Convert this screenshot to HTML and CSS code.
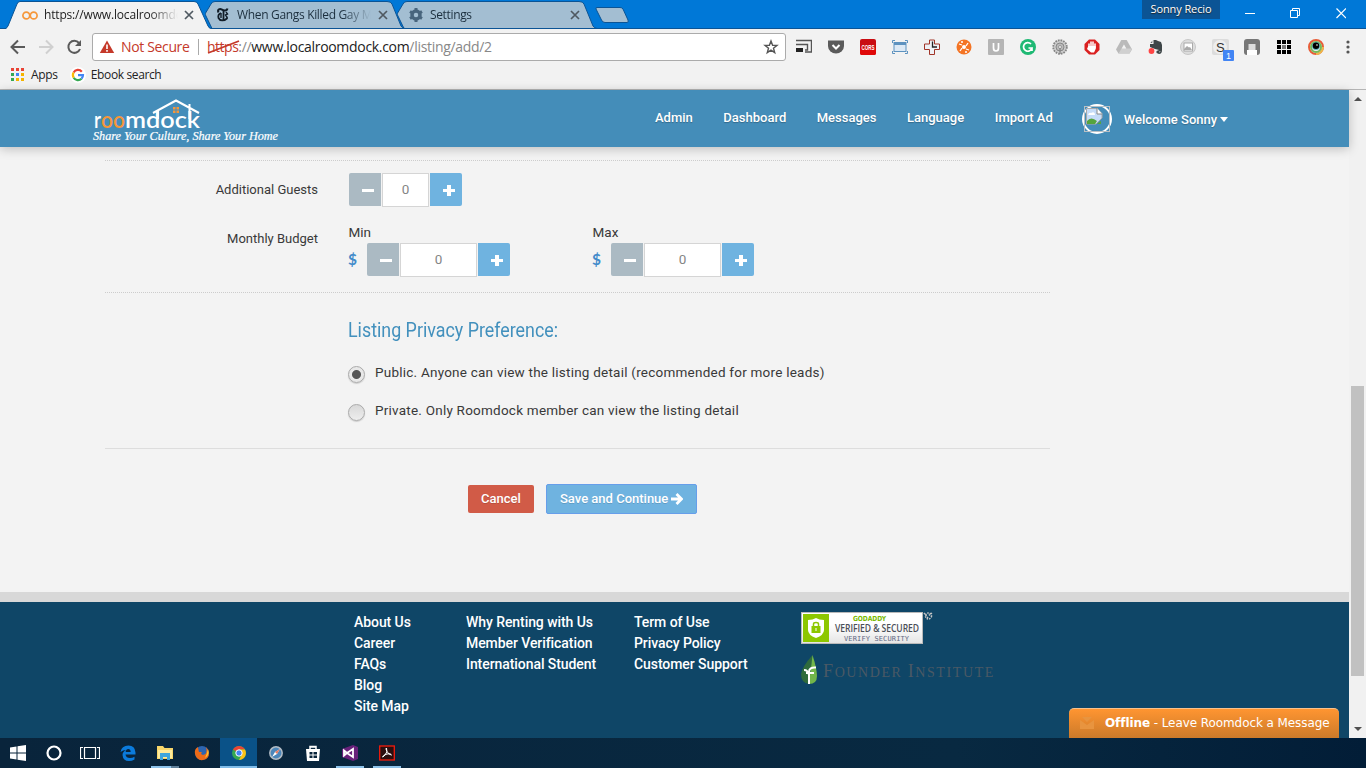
FILE: index.html
```html
<!DOCTYPE html>
<html lang="en">
<head>
<meta charset="utf-8">
<title>Roomdock</title>
<link rel="stylesheet" href="styles.css">
</head>
<body>
<div class="tabstrip">
  <div class="tab tab-first">
    <svg class="tab-shape" width="206" height="29" viewBox="0 0 206 29"><path d="M0 29L2 26L11 4Q12 1.500 14 1.500H188Q191 1.500 192 4L202 26Q203 29 206 29Z" fill="#f2f2f2"/><path d="M0 28.500L2 26L11 4Q12 1.500 14 1.500H188Q191 1.500 192 4L202 26Q203 28.500 206 28.500" fill="none" stroke="#0b5495"/></svg>
    <svg class="fav" width="16" height="16" viewBox="0 0 16 16"><g fill="none" stroke="#f6973a" stroke-width="1.700"><circle cx="4.300" cy="8.500" r="3.400"/><circle cx="11.700" cy="8.500" r="3.400"/></g></svg>
    <span class="tab-title t1">https://www.localroomdc</span>
    <svg class="close" width="10" height="10" viewBox="0 0 10 10"><path d="M1 1L9 9M9 1L1 9"/></svg>
  </div>
  <div class="tab tab-second">
    <svg class="tab-shape" width="206" height="29" viewBox="0 0 206 29"><path d="M0 14L6 4Q7 1.500 10 1.500H182Q186 1.500 187 4L196 26Q197 28 200 28.500H7Z" fill="#a3bed2" stroke="#0b5495"/></svg>
    <svg class="fav" width="16" height="16" viewBox="0 0 16 16"><g fill="none" stroke="#111d28"><path d="M3.500 5.500C2 2 5 1.500 7 2.700S12 4 12.500 1.500" stroke-width="2"/><path d="M6 6C3.500 7 3 9 3.500 11C5 14 9 14.500 12.500 11" stroke-width="1.800"/><path d="M8.500 3.500V13" stroke-width="1.800"/><path d="M6 6V11M11 5L12.500 7L10.500 8L12.500 11" stroke-width="1.400"/></g></svg>
    <span class="tab-title t2">When Gangs Killed Gay M</span>
    <svg class="close" width="10" height="10" viewBox="0 0 10 10"><path d="M1 1L9 9M9 1L1 9"/></svg>
  </div>
  <div class="tab tab-third">
    <svg class="tab-shape" width="206" height="29" viewBox="0 0 206 29"><path d="M0 14L6 4Q7 1.500 10 1.500H182Q186 1.500 187 4L196 26Q197 28 200 28.500H7Z" fill="#a3bed2" stroke="#0b5495"/></svg>
    <svg class="fav" width="16" height="16" viewBox="0 0 16 16"><circle cx="8" cy="8" r="4" fill="none" stroke="#48657d" stroke-width="3.500"/><path d="M8 1V4M8 12V15M2 4.500L4.500 6M11.500 10L14 11.500M2 11.500L4.500 10M11.500 6L14 4.500" stroke="#48657d" stroke-width="3"/></svg>
    <span class="tab-title t3">Settings</span>
    <svg class="close" width="10" height="10" viewBox="0 0 10 10"><path d="M1 1L9 9M9 1L1 9"/></svg>
  </div>
  <svg class="newtab" width="34" height="17" viewBox="0 0 34 17"><path d="M2 .5H25Q27 .5 28 2L33 13Q34 15.500 32 15.500H10Q7.500 15.500 6.500 13L1 2Q.5.5 2 .5Z" fill="#a3bed2" stroke="#0b5495"/></svg>
  <div class="winbar">
    <span class="user">Sonny Recio</span>
    <svg width="110" height="26" viewBox="0 0 110 26" fill="none" stroke="#fff"><path d="M9 13.500H19M54.500 10.500H61.500V17.500H54.500ZM56.500 10V8.500H63.500V15.500H62"/><path d="M100.500 8.500L110 18M110 8.500L100.500 18" stroke-width="1.200"/></svg>
  </div>
</div>
<div class="toolbar">
  <svg class="navicons" width="86" height="24" viewBox="0 0 86 24" fill="none" stroke-width="2"><path d="M25 12H12M18 5.500L11.500 12L18 18.500" stroke="#5a5a5a"/><path d="M39 12H52M46 5.500L52.500 12L46 18.500" stroke="#d0d0d0"/><path d="M79 8A6 6 0 1 0 80 14" stroke="#5a5a5a"/><path d="M81 5V11H75Z" fill="#5a5a5a"/></svg>
  <div class="omnibox">
    <svg class="warn" width="16" height="16" viewBox="0 0 16 16"><path d="M8 1.500L15.200 14H.8Z" fill="#c5392a"/><path d="M8 5.500V10M8 11V12.800" stroke="#fff" stroke-width="1.600"/></svg>
    <span class="notsecure">Not Secure</span>
    <span class="sep"></span>
    <span class="scheme">https<svg class="strike" width="34" height="14" viewBox="0 0 34 14"><path d="M1 13L32 1" stroke="#c5392a" stroke-width="1.800"/></svg></span><span class="url"><i>://</i>www.localroomdock.com<i>/listing/add/2</i></span>
    <svg class="star" width="16" height="16" viewBox="0 0 16 16"><path d="M8 2L9.600 6.200L14 6.400L10.500 9.200L11.700 13.600L8 11.100L4.300 13.600L5.500 9.200L2 6.400L6.400 6.200Z" fill="none" stroke="#555" stroke-width="1.400"/></svg>
  </div>
  <div class="exts">
    <svg viewBox="0 0 16 16"><path d="M0 1.500H15.500V13H9M0 5.500H11.500V11H9" fill="none" stroke="#555" stroke-width="1.400"/><path d="M0 9H7V13H0Z" fill="#222"/></svg>
    <svg viewBox="0 0 16 16"><path d="M0 1.500H16V7A8 7.500 0 0 1 0 7Z" fill="#5b5b5b"/><path d="M4.500 6L8 9.500L11.500 6" fill="none" stroke="#fff" stroke-width="2"/></svg>
    <svg viewBox="0 0 16 16"><rect width="16" height="16" rx="2" fill="#c90d12"/><rect y="9" width="16" height="7" rx="2" fill="#e00909"/><text x="1.500" y="10.700" class="cors" textLength="13" lengthAdjust="spacingAndGlyphs">CORS</text></svg>
    <svg viewBox="0 0 16 16" fill="none" stroke="#5d92bf"><rect x="2" y="3.500" width="12" height="9" fill="#dce9f5"/><path d="M2 5H14" stroke-width="2"/><path d="M.5 4V1.500H3M13 1.500H15.500V4M.5 12V14.500H3M13 14.500H15.500V12"/></svg>
    <svg viewBox="0 0 16 16"><path d="M5.500 1H10.500V5H15.500V10.500H10.500V15.500H5.500V10.500H.5V5H5.500Z" fill="#eef1f5" stroke="#a13529"/><path d="M8.500 2.500V8H13" fill="none" stroke="#222" stroke-width="1.300"/></svg>
    <svg viewBox="0 0 16 16"><circle cx="8" cy="8" r="7.500" fill="#f47424"/><circle cx="8" cy="8" r="2" fill="#fff"/><path d="M3 5L6 6M4 12L6 9M13 11L10 10M12 4L10 7M5 3L7 3M11 13H9" stroke="#fff" stroke-width="1.300"/></svg>
    <svg viewBox="0 0 16 16"><rect width="16" height="16" rx="1" fill="#b5b5b5"/><path d="M5.500 4V9Q5.500 12 8 12T10.500 9V4" fill="none" stroke="#fff" stroke-width="1.700"/></svg>
    <svg viewBox="0 0 16 16"><circle cx="8" cy="8" r="8" fill="#1fb974"/><path d="M11 5A4.300 4.300 0 1 0 12 9H8.500M12 9V12" fill="none" stroke="#fff" stroke-width="1.700"/></svg>
    <svg viewBox="0 0 16 16"><circle cx="8" cy="8" r="6.800" fill="#ccc" stroke="#858585" stroke-width="1.800" stroke-dasharray="1.700 1"/><circle cx="8" cy="8" r="4" fill="#bbb" stroke="#888"/><circle cx="8" cy="8" r="1.500" fill="#eee" stroke="#777" stroke-width=".6"/><path d="M8 9V15" stroke="#777"/></svg>
    <svg viewBox="0 0 16 16"><path d="M5 .5H11L15.500 5V11L11 15.500H5L.5 11V5Z" fill="#da2020"/><path d="M5 9V5M7 8V3M9 8V3M11 9V5" stroke="#fff" stroke-width="1.500" stroke-linecap="round"/><path d="M4.300 7H11.700V10L10 13.500H7L3 10Z" fill="#fff"/></svg>
    <svg viewBox="0 0 16 16"><path d="M5.300 1H10.700L16 10.500L13.500 14.500H2.500L0 10.500Z" fill="#bababa"/><path d="M5.300 1L10 9.500H16L13.500 14.500H2.500L8 5.500Z" fill="#d0d0d0"/><path d="M8 5.500L10.300 9.500H5.700Z" fill="#f2f2f2"/></svg>
    <svg viewBox="0 0 16 16"><path d="M5.500 1H8L10 2L13 3L14 6V11Q14 15 11 15L8.500 14V12L11 11L7 10L2 8V5H5.500Z" fill="#3e4648"/><path d="M2 4L4.500 1.500V4ZM11 13H12V12" fill="#3e4648" stroke="#eee" stroke-width=".5"/><circle cx="3.500" cy="12" r="2.900" fill="#ff4545"/></svg>
    <svg viewBox="0 0 16 16"><circle cx="8" cy="8" r="7.500" fill="#ddd" stroke="#c7c7c7"/><rect x="4" y="4" width="8.500" height="8" fill="#fff" stroke="#aaa"/><path d="M4 10L7 7L9 8.500L10 8L12 11H4Z" fill="#aaa"/></svg>
    <svg viewBox="0 0 24 24" class="sext"><rect width="17" height="16" rx="2" fill="#dcdcdc"/><circle cx="8" cy="8" r="7" fill="#eee"/><text x="4" y="12.500" class="s">S</text><rect x="11" y="11" width="11" height="11" rx="1" fill="#4285f4"/><text x="14" y="20" class="one">1</text></svg>
    <svg viewBox="0 0 16 16"><rect width="16" height="16" rx="3" fill="#777"/><rect x="4.500" y="5" width="7" height="7" fill="#ddd"/><path d="M3 16V11H13V16Z" fill="#fff"/></svg>
    <svg viewBox="0 0 16 16"><path d="M1 1H5V5H1ZM6 1H10V5H6ZM11 1H15V5H11ZM1 6H5V10H1ZM11 6H15V10H11ZM1 11H5V15H1ZM6 11H10V15H6ZM11 11H15V15H11Z"/><path d="M6 6H10V10H6Z" fill="#777"/></svg>
    <svg viewBox="0 0 16 16"><circle cx="8" cy="8" r="7" fill="none" stroke="#e85d38" stroke-width="2"/><path d="M8 15A7 7 0 0 0 15 8" fill="none" stroke="#edb84a" stroke-width="2"/><circle cx="8" cy="8" r="5" fill="none" stroke="#73b958" stroke-width="2"/><circle cx="8" cy="7" r="4" fill="#58aeb7"/><circle cx="8" cy="6.800" r="3.200"/><circle cx="9" cy="6" r=".8" fill="#fff"/></svg>
    <svg viewBox="0 0 16 16" fill="#555"><circle cx="8" cy="3" r="1.600"/><circle cx="8" cy="8" r="1.600"/><circle cx="8" cy="13" r="1.600"/></svg>
  </div>
</div>
<div class="bookmarks">
  <svg width="14" height="14" viewBox="0 0 14 14"><path d="M0 0H3V3H0ZM5 0H8V3H5ZM10 0H13V3H10Z" fill="#e94335"/><path d="M0 5H3V8H0ZM0 10H3V13H0Z" fill="#34a853"/><path d="M5 5H8V8H5Z" fill="#4285f4"/><path d="M10 5H13V8H10ZM5 10H8V13H5ZM10 10H13V13H10Z" fill="#f5b400"/></svg>
  <span class="bm-apps">Apps</span>
  <svg width="16" height="16" viewBox="0 0 16 16"><circle cx="8" cy="8" r="8" fill="#fff"/><g fill="none" stroke-width="2.200"><path d="M3.600 5.500A5 5 0 0 1 11.800 4.700" stroke="#ea4335"/><path d="M3.600 5.500A5 5 0 0 0 3.700 10.700" stroke="#fbbc05"/><path d="M3.700 10.700A5 5 0 0 0 11.500 11.700" stroke="#34a853"/><path d="M11.500 11.700A5 5 0 0 0 13 8.100H8" stroke="#4285f4"/></g></svg>
  <span class="bm-search">Ebook search</span>
</div>
<div class="viewport">
  <div class="page">
    <header class="header">
      <svg class="logo" width="200" height="57" viewBox="0 0 200 57">
        <text class="logo-text" x="14" y="38" textLength="7" lengthAdjust="spacingAndGlyphs">r</text>
        <text class="logo-text oo" x="21" y="38" textLength="24" lengthAdjust="spacingAndGlyphs">oo</text>
        <text class="logo-text" x="45" y="38" textLength="75" lengthAdjust="spacingAndGlyphs">mdock</text>
        <path d="M73 23L96 10.500L119 23M109.500 14V29M78 21V29" fill="none" stroke="#fff" stroke-width="2"/>
        <path d="M93 17H95.500V19.500H93ZM96.500 17H99V19.500H96.500ZM93 20.500H95.500V23H93ZM96.500 20.500H99V23H96.500Z" fill="#f6973a"/>
        <text class="tagline" x="13" y="50" textLength="185" lengthAdjust="spacingAndGlyphs">Share Your Culture, Share Your Home</text>
      </svg>
      <nav class="nav"><a>Admin</a><a>Dashboard</a><a>Messages</a><a>Language</a><a>Import Ad</a></nav>
      <svg class="avatar" width="32" height="32" viewBox="0 0 32 32"><circle cx="16" cy="16" r="14" fill="none" stroke="#fff" stroke-width="2"/><rect x="3.500" y="3.500" width="25" height="25" fill="none" stroke="#b9c0c5"/><path d="M5.500 5.500H16L21 10.500V15L15 21H5.500Z" fill="#c5dcf8" stroke="#aaa"/><path d="M16 5V11H21" fill="#fff" stroke="#888"/><path d="M7 12Q8 9 10 10Q14 8 14 12Z" fill="#fff"/><path d="M6 21V18Q10 13 16 18L14 21ZM16 21L20 18V21Z" fill="#55a43d"/></svg>
      <span class="welcome">Welcome Sonny</span><span class="caret"></span>
    </header>
    <main class="main">
      <section class="row guests">
        <label class="label">Additional Guests</label>
        <div class="stepper small"><span class="btn minus"></span><span class="field">0</span><span class="btn plus"></span></div>
      </section>
      <section class="row budget">
        <label class="label">Monthly Budget</label>
        <div class="amount"><div class="cap">Min</div><div class="line"><b>$</b><div class="stepper"><span class="btn minus"></span><span class="field">0</span><span class="btn plus"></span></div></div></div>
        <div class="amount"><div class="cap">Max</div><div class="line"><b>$</b><div class="stepper"><span class="btn minus"></span><span class="field">0</span><span class="btn plus"></span></div></div></div>
      </section>
      <section class="privacy">
        <h2>Listing Privacy Preference:</h2>
        <div class="option"><span class="radio on"></span><span class="o1">Public. Anyone can view the listing detail (recommended for more leads)</span></div>
        <div class="option"><span class="radio"></span><span class="o2">Private. Only Roomdock member can view the listing detail</span></div>
      </section>
      <div class="actions"><span class="cancel">Cancel</span><span class="save">Save and Continue <svg width="12" height="12" viewBox="0 0 12 12"><path d="M0 6H10M5.500 1L10.500 6L5.500 11" fill="none" stroke="#fff" stroke-width="2.800"/></svg></span></div>
    </main>
    <footer class="footer">
      <div class="col c1"><a>About Us</a><a>Career</a><a>FAQs</a><a>Blog</a><a>Site Map</a></div>
      <div class="col c2"><a>Why Renting with Us</a><a>Member Verification</a><a>International Student</a></div>
      <div class="col c3"><a>Term of Use</a><a>Privacy Policy</a><a>Customer Support</a></div>
      <div class="col c4">
        <svg width="132" height="32" viewBox="0 0 132 32"><defs><linearGradient id="bg" x2="0" y2="1"><stop offset=".4" stop-color="#fff"/><stop offset="1" stop-color="#e4e4e4"/></linearGradient></defs><rect x=".5" y=".5" width="121" height="31" fill="url(#bg)" stroke="#b9b9b9"/><rect x="2" y="2" width="26" height="28" fill="#8dc700"/><path d="M7 8Q12 8 15 6Q18 8 23 8V18Q23 23 15 26Q7 23 7 18Z" fill="#fff"/><rect x="10.500" y="14" width="9" height="7" fill="#8dc700"/><path d="M12.500 14V12Q12.500 10.500 15 10.500T17.500 12V14" fill="none" stroke="#8dc700" stroke-width="1.500"/><path d="M15 16V19" stroke="#fff"/><text class="gd" x="52" y="9" textLength="33" lengthAdjust="spacingAndGlyphs">GODADDY</text><text class="vs" x="34" y="20" textLength="84" lengthAdjust="spacingAndGlyphs">VERIFIED &amp; SECURED</text><text class="verify" x="43" y="28.500" textLength="65">VERIFY SECURITY</text><g fill="none" stroke="#c5c5c5" stroke-width="1.500" stroke-dasharray="1.500 1"><circle cx="127.500" cy="4" r="3"/><path d="M123 1L127 6M131 1L127 4"/></g></svg>
        <svg class="founder" width="200" height="30" viewBox="0 0 200 30"><path d="M11.500 0Q1 12 0 19Q0 28 8 29Z" fill="#2f6b3c"/><path d="M11.500 0L8 29Q16 29 16 21Q16 14 11.500 0Z" fill="#72b64a"/><path d="M8 29V17Q8 12 15 12.500M3 15Q7 15 8 20M5 18H13" fill="none" stroke="#fff" stroke-width="2"/><text class="fi" x="22" y="22"><tspan class="big">F</tspan>OUNDER <tspan class="big">I</tspan>NSTITUTE</text></svg>
      </div>
    </footer>
    <div class="chat"><svg width="14" height="12" viewBox="0 0 14 12"><path d="M0 3L7 8L14 3V12H0ZM2 0H12L7 5Z" fill="#e8943f"/></svg><span><b>Offline</b> - Leave Roomdock a Message</span></div>
  </div>
  <div class="scroll"><i class="up"></i><div class="thumb"></div><i class="down"></i></div>
</div>
<div class="taskbar">
  <span class="task sm"><svg viewBox="0 0 16 16" fill="#fff"><path d="M0 2.500L6.500 1.500V7.500H0ZM7.500 1.300L16 0V7.500H7.500ZM0 8.500H6.500V14.500L0 13.500ZM7.500 8.500H16V16L7.500 14.700Z"/></svg></span>
  <span class="task sm"><svg viewBox="0 0 16 16"><circle cx="8" cy="8" r="6.500" fill="none" stroke="#fff" stroke-width="2.200"/></svg></span>
  <span class="task sm"><svg class="wide" viewBox="0 0 20 16"><path d="M4.500 2.500H15.500V13.500H4.500ZM3 2.500H.5V13.500H3M17 2.500H19.500V13.500H17" fill="none" stroke="#fff" stroke-width="1.200"/></svg></span>
  <span class="task first"><svg viewBox="0 0 16 16"><path d="M.5 7Q1.500 .5 8.500.5Q15 .5 15.500 7.500V9.500H5.500Q6 13 10 13Q12.500 13 14.500 11.800V14.500Q12 16 9 16Q3 16 2.500 10Q2.500 7 6 5Q3 5 .5 7ZM5.700 7H10.700Q10.500 4 8.300 4Q6 4 5.700 7Z" fill="#0b7bdc"/></svg></span>
  <span class="task open split"><svg viewBox="0 0 16 16"><path d="M0 1H6L7.500 3H16V14H0Z" fill="#f8d66b"/><path d="M1 5H15V13H1Z" fill="#ffeb9b"/><path d="M3 8H13V15H10V12H6V15H3Z" fill="#3fa6dc"/></svg></span>
  <span class="task"><svg viewBox="0 0 16 16"><circle cx="8" cy="8" r="7" fill="#2d65b0"/><path d="M4 2Q0 4 1 9Q3 16 9 15Q15 14 15 8Q14 4 12 2Q14 9 9 10Q6 9 8 7H5Q4 4 4 2Z" fill="#ed6b18"/><path d="M14 4Q16 10 11 13Q13 9 14 4Z" fill="#ffc529"/></svg></span>
  <span class="task active"><svg viewBox="0 0 16 16"><circle cx="8" cy="8" r="7" fill="#35a852"/><path d="M8 8L2 4.500A7 7 0 0 1 14 4.500H8Z" fill="#ea4335"/><path d="M8 4.500H14A7 7 0 0 1 8 15L11 9Z" fill="#fbc116"/><circle cx="8" cy="8" r="3.200" fill="#4285f4" stroke="#fff"/></svg></span>
  <span class="task"><svg viewBox="0 0 16 16"><circle cx="8" cy="8" r="6.200" fill="#4b86ba" stroke="#b3bcc5" stroke-width="1.500"/><path d="M12 4L9 9L4 12L7 7Z" fill="#fff"/><path d="M12 4L9 9L7 7Z" fill="#e37964"/></svg></span>
  <span class="task"><svg viewBox="0 0 16 16"><path d="M5 5V1.500H11V5M5 2H11" fill="none" stroke="#fff" stroke-width="1.500"/><path d="M1 4H15L14 16H2Z" fill="#fff"/><path d="M4.500 7H7.500V9.500H4.500ZM8.500 7H12V9.500H8.500ZM4.500 10.500H7.500V13H4.500ZM8.500 10.500H12V13H8.500Z" fill="#09243b"/></svg></span>
  <span class="task open"><svg viewBox="0 0 16 16"><path d="M11 0L16 2V14L11 16L0 12V4Z" fill="#68217a"/><path d="M2 5.500V10.500L5 8L11 4V12L5 8Z" fill="none" stroke="#fff" stroke-width="1.800"/></svg></span>
  <span class="task open"><svg viewBox="0 0 16 16"><rect x=".7" y="1" width="14.600" height="14" fill="#2b0f10" stroke="#f21b0c" stroke-width="1.300"/><path d="M7.500 3Q9 7 6 10T3.500 12Q4 10 8 9T12.500 10Q10 10 8 6.500T7.500 3" fill="none" stroke="#fff"/></svg></span>
</div>
</body>
</html>
```
FILE: styles.css
```css
* { box-sizing: border-box; }
body { margin: 0; width: 1366px; height: 768px; overflow: hidden; display: flex; flex-direction: column; font-family: Roboto, "Liberation Sans", sans-serif; background: #f3f3f3; }
svg { display: block; flex: none; }
.tabstrip { height: 29px; background: #0078d7; border-bottom: 1px solid #0b5495; display: flex; position: relative; }
.tab { position: relative; height: 29px; display: flex; align-items: center; width: 206px; padding-left: 16px; flex: none; }
.tab-shape { position: absolute; left: 0; top: 0; }
.tab-first { margin-left: 6px; z-index: 3; }
.tab-second { margin-left: -7px; padding-left: 10px; z-index: 2; }
.tab-third { margin-left: -14px; width: 204px; padding-left: 11px; z-index: 1; }
.tab .fav { position: relative; margin-right: 6px; }
.tab-title { position: relative; width: 134px; margin-right: 6px; white-space: nowrap; font: 12px/16px "Open Sans", sans-serif; color: #222; mask-image: linear-gradient(90deg, #000 105px, transparent 134px); }
.t2, .t3 { color: #1c2f3e; }
.t1 { letter-spacing: -.17px; }
.t2 { letter-spacing: -.33px; margin-right: 7px; }
.t3 { letter-spacing: -.35px; }
.close { position: relative; stroke: #4f5961; stroke-width: 1.700; }
.newtab { margin: 7px 0 0 -6px; }
.winbar { margin-left: auto; display: flex; padding-right: 20px; }
.user { width: 78px; height: 19px; background: #0b5495; color: #fff; font: 11px/18px "Open Sans", sans-serif; text-align: center; margin-right: 16px; text-shadow: 0 1px 1px #222; letter-spacing: -.1px; }
.toolbar { height: 35px; background: #f2f2f2; display: flex; padding-top: 4px; }
.navicons { margin: 2px 6px 0 0; }
.omnibox { width: 694px; height: 28px; border: 1px solid #ababab; border-radius: 3px; background: #fff; display: flex; align-items: center; font: 14px/20px "Open Sans", sans-serif; padding: 0 6px; }
.notsecure { margin-left: 6px; width: 77px; color: #c5392a; white-space: nowrap; letter-spacing: -.35px; }
.sep { width: 1px; height: 16px; background: #aaa; margin-right: 8px; }
.scheme { position: relative; color: #c5392a; letter-spacing: -.5px; }
.strike { position: absolute; left: 0; top: 3px; }
.url { color: #222; white-space: nowrap; letter-spacing: -.31px; }
.url i { color: #888; font-style: normal; }
.star { margin-left: auto; }
.exts { display: grid; grid-template-columns: repeat(18, 32px); margin-left: 2px; justify-items: center; padding-top: 6px; }
.exts svg { width: 16px; height: 16px; }
.exts .sext { width: 24px; height: 24px; margin-left: 7px; }
.cors { font: bold 7px "Liberation Sans"; fill: #fff; }
.s { font: 13px "Liberation Sans"; fill: #333; }
.one { font: 9px "Liberation Sans"; fill: #fff; }
.bookmarks { height: 26px; background: #f2f2f2; border-bottom: 1px solid #b5b5b5; display: flex; align-items: center; padding: 0 0 4px 11px; font: 12px/16px "Open Sans", sans-serif; color: #222; }
.bm-apps { margin: 0 12px 0 6px; letter-spacing: -.3px; }
.bm-search { margin-left: 5px; letter-spacing: -.37px; }
.viewport { height: 648px; display: flex; }
.page { width: 1349px; position: relative; display: flex; flex-direction: column; background: #f3f3f3; }
.header { height: 57px; background: #448db9; display: flex; align-items: center; box-shadow: 0 2px 10px rgba(0,0,0,.22); position: relative; color: #fff; font: 500 13px/16px Roboto, sans-serif; padding-left: 80px; }
.nav { display: flex; gap: 30.5px; margin-left: 375px; padding-bottom: 2px; text-shadow: 0 1px 1px rgba(0,0,0,.25); }
.avatar { margin-left: 28px; }
.welcome { margin: 2px 0 0 11px; text-shadow: 0 1px 1px rgba(0,0,0,.25); }
.caret { border: 4px solid transparent; border-top: 5px solid #fff; border-bottom: 0; margin: 1px 0 0 3px; }
.logo-text { font: 600 22px Lato, sans-serif; fill: #fff; }
.logo-text.oo { fill: #f6973a; }
.tagline { font: italic 12px "Liberation Serif", serif; fill: #fff; stroke: #fff; stroke-width: .2; }
.main { height: 445px; margin-left: 105px; width: 945px; padding-top: 13px; color: #393939; font-size: 13px; }
.row { border-top: 1px dotted #ccc; display: flex; }
.label { width: 213px; text-align: right; margin-right: 31px; flex: none; font-size: 13px; line-height: 18px; }
.guests { height: 61px; padding-top: 12px; }
.guests .label { padding-top: 8px; }
.budget { border-top: 0; border-bottom: 1px dotted #ccc; height: 72px; }
.budget .label { padding-top: 9px; }
.amount { width: 244px; margin-left: -1px; margin-right: 1px; }
.cap { font-size: 13.5px; line-height: 18px; padding: 2px 0 0 .5px; margin-bottom: 2px; }
.line { display: flex; }
.line b { width: 19px; color: #428bca; font: 700 15.5px/32px Lato, sans-serif; }
.stepper { display: flex; gap: 1px; }
.stepper .btn { width: 32px; height: 33px; background: #abbac3; position: relative; border-radius: 2px 0 0 2px; }
.stepper .plus { background: #6fb3e0; border-radius: 0 2px 2px 0; }
.btn::before, .plus::after { content: ""; position: absolute; left: 13px; top: 16px; width: 12px; height: 3px; background: #fff; }
.plus::after { left: 17px; top: 12px; width: 4px; height: 11px; }
.field { width: 77px; height: 34px; border: 1px solid #d5d5d5; background: #fff; color: #858585; font-size: 13.5px; line-height: 31px; text-align: center; }
.small .field { width: 47px; }
.privacy { height: 156px; padding: 24px 0 0 243px; border-bottom: 1px solid #ddd; }
.privacy h2 { margin: 0 0 19px; font: 400 20px/26px Roboto, sans-serif; color: #478fca; color: #4290bd; transform: scaleX(.892); transform-origin: left; white-space: nowrap; }
.option { display: flex; height: 38px; font-size: 13.5px; line-height: 20px; white-space: nowrap; letter-spacing: .23px; }
.radio { width: 17px; height: 17px; margin: 4px 10px 0 0; border: 1px solid #aaa; border-radius: 50%; background: linear-gradient(#d8d8d8, #eee); box-shadow: 0 1px 1px #ccc; }
.radio.on { background: radial-gradient(#555 0 4px, #e8e8e8 5px); }
.actions { display: flex; gap: 12px; padding: 35px 0 0 363px; align-items: center; color: #fff; font: 500 13px/16px Roboto, sans-serif; text-shadow: 0 1px 0 rgba(0,0,0,.15); }
.cancel { width: 66px; height: 28px; border-radius: 2px; background: #d15b47; text-align: center; line-height: 27px; }
.save { width: 151px; height: 30px; background: #6fb3e0; border: 1.5px solid #669eea; border-radius: 2px; display: flex; align-items: center; gap: 3px; padding: 0 0 1px 13px; white-space: nowrap; }
.footer { height: 146px; background: #0f4667; border-top: 10px solid #d8d8d8; display: flex; padding: 10px 0 0 354px; color: #fff; font: 500 14px/21px Roboto, sans-serif; }
.col { display: flex; flex-direction: column; white-space: nowrap; letter-spacing: -.07px; }
.c1 { width: 112px; }
.c2 { width: 168px; }
.c3 { width: 167px; }
.founder { margin-top: 11px; }
.gd { font: bold 7px "DejaVu Sans"; fill: #78b900; }
.vs { font: 600 10.500px "Open Sans"; fill: #4b4f59; }
.verify { font: 7px "DejaVu Sans Mono"; fill: #626985; }
.fi { font: 14px "Liberation Serif"; fill: #4a5965; letter-spacing: 1.600px; }
.big { font-size: 18px; }
.chat { position: absolute; left: 1069px; top: 618px; width: 270px; height: 30px; border-radius: 5px 5px 0 0; border-top: 1px solid #f9c18b; background: linear-gradient(#ff9531, #cb7a2a); color: #fff; font: 12px/16px "DejaVu Sans", sans-serif; display: flex; align-items: center; gap: 11px; padding: 0 0 2px 11px; white-space: nowrap; letter-spacing: -.08px; }
.scroll { width: 17px; background: #f1f1f1; display: flex; flex-direction: column; align-items: center; }
.up, .down { border: 4px solid transparent; }
.up { border-bottom: 4px solid #505050; border-top: 0; margin-top: 7px; }
.thumb { width: 13px; height: 290px; margin-top: 285px; background: #c1c1c1; }
.down { border-top: 4px solid #505050; border-bottom: 0; margin-top: 51px; }
.taskbar { height: 30px; background: linear-gradient(90deg, #09243b, #082941 70%, #021d37); display: flex; }
.task { width: 37px; height: 30px; display: flex; align-items: center; justify-content: center; position: relative; }
.task.sm { width: 36px; margin: 0; }
.task.first { margin-left: 1px; }
.task svg { width: 16px; height: 16px; }
.task .wide { width: 20px; }
.task.active { background: #0a5288; border-bottom: 2px solid #80bce9; padding-top: 2px; }
.task.open::after { content: ""; position: absolute; bottom: 0; left: 5px; width: 28px; height: 2px; background: #8dc2ea; }
.task.split::after { background: linear-gradient(90deg, #8dc2ea 20px, #60809a 20px); }
```
